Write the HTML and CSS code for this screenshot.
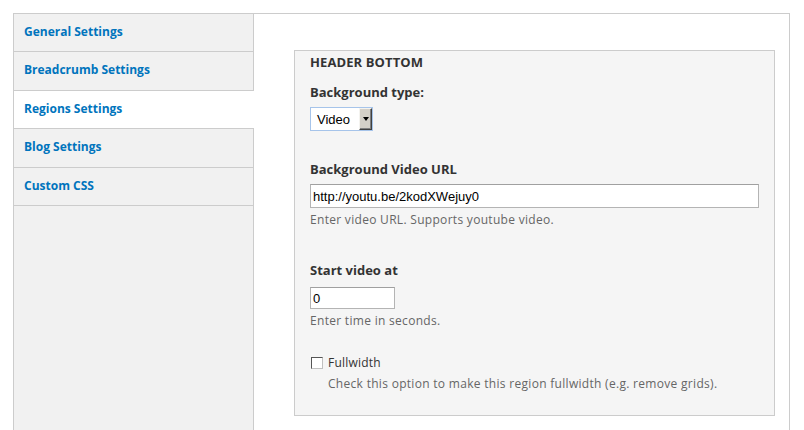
FILE: index.html
```html
<!DOCTYPE html>
<html>
<head>
<meta charset="utf-8">
<link rel="stylesheet" href="styles.css">
</head>
<body>
<div class="page">
  <div class="vtabs">
    <ul class="tabs">
      <li class="tab"><a href="#">General Settings</a></li>
      <li class="tab"><a href="#">Breadcrumb Settings</a></li>
      <li class="tab active"><a href="#">Regions Settings</a></li>
      <li class="tab"><a href="#">Blog Settings</a></li>
      <li class="tab"><a href="#">Custom CSS</a></li>
    </ul>
    <div class="pane">
      <div class="fieldset">
        <div class="legend">HEADER BOTTOM</div>
        <label class="label lbl-type">Background type:</label>
        <div class="select">
          <span class="select-value">Video</span>
          <span class="select-arrow"><span class="tri"></span></span>
        </div>
        <label class="label lbl-url">Background Video URL</label>
        <input class="text url" type="text" value="http://youtu.be/2kodXWejuy0">
        <div class="desc desc-url">Enter video URL. Supports youtube video.</div>
        <label class="label lbl-start">Start video at</label>
        <input class="text time" type="text" value="0">
        <div class="desc desc-time">Enter time in seconds.</div>
        <div class="check-row">
          <input class="check" type="checkbox">
          <span class="check-label">Fullwidth</span>
        </div>
        <div class="desc desc-check">Check this option to make this region fullwidth (e.g. remove grids).</div>
      </div>
    </div>
  </div>
</div>
</body>
</html>
```

FILE: styles.css
```css
html, body {
  margin: 0;
  padding: 0;
  background: #fff;
  font-family: "Open Sans", "Liberation Sans", sans-serif;
  color: #333;
}
.page {
  padding: 13px 14px 0 13px;
  height: 430px;
  box-sizing: border-box;
  overflow: hidden;
}
.vtabs {
  display: flex;
  border: 1px solid #cccccc;
  border-bottom: none;
  min-height: 440px;
}
.tabs {
  list-style: none;
  margin: 0;
  padding: 0;
  width: 239px;
  flex: none;
  background: #f1f1f1;
  border-right: 1px solid #cccccc;
}
.tab {
  border-bottom: 1px solid #cccccc;
  padding: 10px 0 0 10px;
  box-sizing: content-box;
  height: 27.4px;
}
.tab.active {
  background: #fff;
  margin-right: -1px;
}
.tab a {
  display: block;
  font-size: 12px;
  line-height: 16px;
  font-weight: 700;
  color: #0074bd;
  text-decoration: none;
}
.pane {
  flex: 1;
  padding: 36px 17px 0 40px;
}
.fieldset {
  border: 1px solid #cccccc;
  background: #f5f5f5;
  padding: 3px 15px 23px 15px;
  display: flex;
  flex-direction: column;
  align-items: flex-start;
}
.legend {
  font-size: 13px;
  line-height: 16px;
  font-weight: 700;
  color: #333;
  letter-spacing: 0.1px;
}
.label {
  display: block;
  font-size: 13px;
  line-height: 16px;
  font-weight: 700;
  color: #333;
}
.lbl-type { margin-top: 14px; }
.lbl-url { margin-top: 30px; }
.lbl-start { margin-top: 34px; }
.select {
  margin-top: 7px;
  display: flex;
  align-items: center;
  width: 63px;
  height: 24px;
  box-sizing: border-box;
  border: 1px solid #a6c4ea;
  background: #fff;
  padding: 0 0 0 6px;
  justify-content: space-between;
}
.select-value {
  font-family: "Liberation Sans", Arial, sans-serif;
  font-size: 13px;
  color: #000;
}
.select-arrow {
  width: 13px;
  height: 22px;
  box-sizing: border-box;
  background: #d4d0c8;
  border-top: 1px solid #f4f3ef;
  border-left: 1px solid #f4f3ef;
  border-right: 1px solid #404040;
  border-bottom: 1px solid #404040;
  box-shadow: inset -1px -1px 0 #808080;
  display: flex;
  align-items: center;
  justify-content: center;
}
.tri {
  width: 0;
  height: 0;
  border-left: 3.5px solid transparent;
  border-right: 3.5px solid transparent;
  border-top: 4px solid #000;
}
.text {
  display: block;
  box-sizing: border-box;
  font-family: "Liberation Sans", Arial, sans-serif;
  font-size: 13px;
  color: #000;
  background: #fff;
  border: 1px solid #b4b4b4;
  border-top-color: #a0a0a0;
  padding: 0 2px;
  margin: 7px 0 0 0;
  outline: none;
}
.url {
  width: 449px;
  height: 24px;
}
.time {
  width: 85px;
  height: 22px;
  margin-top: 9px;
}
.desc {
  font-size: 12px;
  line-height: 16px;
  color: #666;
  letter-spacing: 0.3px;
}
.desc-url { margin-top: 4px; }
.desc-time { margin-top: 4px; }
.check-row {
  margin-top: 26px;
  display: flex;
  align-items: center;
  height: 16px;
}
.check {
  -webkit-appearance: none;
  appearance: none;
  margin: 0 0 0 1px;
  width: 12px;
  height: 12px;
  box-sizing: border-box;
  background: #fff;
  border: 1px solid #c0c0c0;
  border-top-color: #555;
  border-left-color: #555;
}
.check-label {
  margin-left: 5px;
  font-size: 12px;
  line-height: 16px;
  color: #333;
  letter-spacing: 0.2px;
}
.desc-check {
  margin-top: 5px;
  margin-left: 18px;
}
```
